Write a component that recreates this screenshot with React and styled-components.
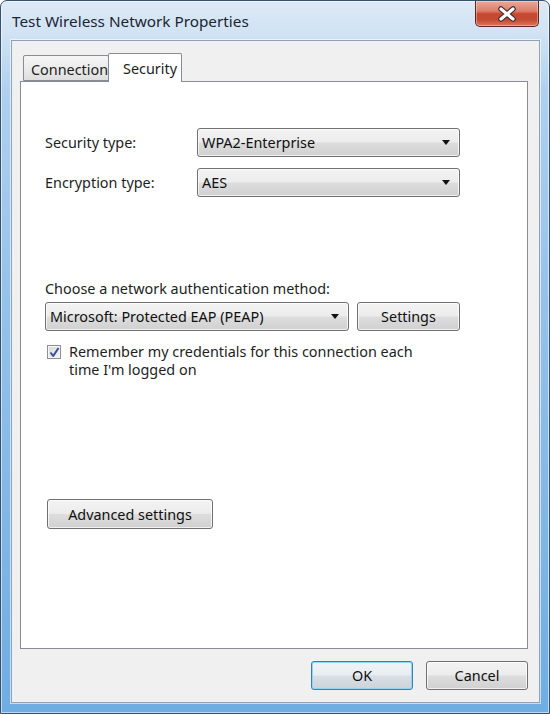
import React from 'react'
import styled, { createGlobalStyle } from 'styled-components'

const TEXT = '#1e1e1e'
const LINE = '#898c95'

const GlobalStyle = createGlobalStyle`
  html, body {
    margin: 0;
    padding: 0;
    background: #ffffff;
  }
  body {
    font-family: "Noto Sans", "Open Sans", sans-serif;
    color: ${TEXT};
  }
`

const Window = styled.div`
  width: 550px;
  height: 714px;
  box-sizing: border-box;
  display: flex;
  flex-direction: column;
  padding: 0 9px 10px 10px;
  border: 1px solid #34506c;
  border-radius: 7px 7px 0 0;
  background: linear-gradient(180deg, #dde9f5 0px, #d2e3f4 30px, #afd0ef 90px, #95c2ea 300px, #6fade2 100%);
  box-shadow: inset 0 0 0 1px rgba(255, 255, 255, 0.55);
`

const TitleBar = styled.div`
  height: 39px;
  flex: none;
  display: flex;
  justify-content: space-between;
  align-items: flex-start;
`

const Title = styled.div`
  margin-top: 10px;
  padding-left: 1px;
  font-size: 15.3px;
  color: #1b2535;
`

const CloseButton = styled.div`
  width: 64px;
  height: 26px;
  box-sizing: border-box;
  margin-right: 1px;
  display: flex;
  align-items: center;
  justify-content: center;
  border: 1px solid #5a2a22;
  border-top: none;
  border-radius: 0 0 5px 5px;
  background: linear-gradient(180deg, #eaa99a 0%, #dc7e6a 40%, #c8462f 52%, #c44b33 75%, #d9785c 100%);
  box-shadow: inset 0 0 0 1px rgba(255, 255, 255, 0.35);
`

const Client = styled.div`
  flex: 1;
  display: flex;
  flex-direction: column;
  background: #f0f0f0;
  border: 1px solid #8ea3ba;
  box-shadow: 0 0 0 1px rgba(255, 255, 255, 0.6);
  padding: 12px 11px 0 8px;
  min-height: 0;
`

const TabStrip = styled.div`
  display: flex;
  align-items: flex-end;
  padding-left: 3px;
  height: 28px;
  flex: none;
`

const Tab = styled.div`
  box-sizing: border-box;
  height: ${p => (p.$active ? '29px' : '26px')};
  width: ${p => p.$width}px;
  margin-left: ${p => (p.$active ? '-1px' : '0')};
  margin-bottom: ${p => (p.$active ? '-1px' : '0')};
  position: relative;
  z-index: ${p => (p.$active ? 1 : 0)};
  border: 1px solid ${LINE};
  border-bottom: ${p => (p.$active ? 'none' : `1px solid ${LINE}`)};
  border-radius: 2px 2px 0 0;
  background: ${p => (p.$active ? '#ffffff' : 'linear-gradient(180deg, #f6f6f6 0%, #ebebeb 50%, #dedede 100%)')};
  display: flex;
  align-items: center;
  padding-left: ${p => p.$pad}px;
  padding-top: ${p => (p.$active ? '0' : '2px')};
  font-size: 14.4px;
  white-space: nowrap;
`

const Panel = styled.div`
  flex: 1;
  display: flex;
  flex-direction: column;
  background: #ffffff;
  border: 1px solid ${LINE};
  padding: 46px 0 0 24px;
`

const FieldRow = styled.div`
  display: grid;
  grid-template-columns: 152px 263px;
  align-items: center;
  height: 29px;
  & + & {
    margin-top: 11px;
  }
  font-size: 14.4px;
`

const Select = styled.div`
  box-sizing: border-box;
  width: ${p => p.$width}px;
  height: 29px;
  display: flex;
  align-items: center;
  justify-content: space-between;
  padding: 0 9px 0 4px;
  border: 1px solid #707070;
  border-radius: 3px;
  background: linear-gradient(180deg, #f3f3f3 0%, #ececec 48%, #dddddd 52%, #d0d0d0 100%);
  box-shadow: inset 0 0 0 1px rgba(255, 255, 255, 0.7);
  font-size: 14.4px;
  color: #101010;
`

const Arrow = styled.span`
  width: 0;
  height: 0;
  border-left: 4px solid transparent;
  border-right: 4px solid transparent;
  border-top: 5px solid #111;
`

const SectionLabel = styled.div`
  margin-top: 83px;
  height: 18px;
  line-height: 18px;
  font-size: 14.4px;
`

const AuthRow = styled.div`
  margin-top: 4px;
  display: flex;
  gap: 8px;
`

const Button = styled.div`
  box-sizing: border-box;
  width: ${p => p.$width}px;
  height: ${p => p.$height || 29}px;
  display: flex;
  align-items: center;
  justify-content: center;
  border: 1px solid ${p => (p.$default ? '#3c7fb1' : '#707070')};
  border-radius: 3px;
  background: ${p =>
    p.$default
      ? 'linear-gradient(180deg, #f0f4f7 0%, #e8edf1 48%, #d9dfe4 52%, #ccd3d9 100%)'
      : 'linear-gradient(180deg, #f3f3f3 0%, #ececec 48%, #dddddd 52%, #d0d0d0 100%)'};
  box-shadow: inset 0 0 0 1px ${p => (p.$default ? '#8fd6f6' : 'rgba(255, 255, 255, 0.7)')};
  font-size: 14.4px;
  color: #101010;
`

const CheckRow = styled.div`
  margin-top: 12px;
  margin-left: 2px;
  display: flex;
  align-items: flex-start;
  gap: 8px;
  font-size: 14.4px;
  line-height: 18px;
`

const CheckBox = styled.div`
  flex: none;
  width: 14px;
  height: 14px;
  box-sizing: border-box;
  margin-top: 2px;
  border: 1px solid #8e8f8f;
  background: linear-gradient(135deg, #d5d9de 0%, #f4f4f4 100%);
  box-shadow: inset 0 0 0 1px #f6f6f6;
  display: flex;
  align-items: center;
  justify-content: center;
`

const AdvancedWrap = styled.div`
  margin-top: 120px;
  margin-left: 2px;
`

const Footer = styled.div`
  flex: none;
  display: flex;
  justify-content: flex-end;
  gap: 13px;
  padding: 12px 0 12px;
`

export default function App() {
  return (
    <>
      <GlobalStyle />
      <Window>
        <TitleBar>
          <Title>Test Wireless Network Properties</Title>
          <CloseButton>
            <svg width="22" height="16" viewBox="0 0 22 16">
              <path d="M5 3 L17 13 M17 3 L5 13" stroke="#3e2a2e" strokeWidth="5.5" strokeLinecap="round" />
              <path d="M5 3 L17 13 M17 3 L5 13" stroke="#ffffff" strokeWidth="3.2" strokeLinecap="round" />
            </svg>
          </CloseButton>
        </TitleBar>
        <Client>
          <TabStrip>
            <Tab $width={86} $pad={7}>Connection</Tab>
            <Tab $active $width={74} $pad={14}>Security</Tab>
          </TabStrip>
          <Panel>
            <FieldRow>
              <span>Security type:</span>
              <Select $width={263}>
                <span>WPA2-Enterprise</span>
                <Arrow />
              </Select>
            </FieldRow>
            <FieldRow>
              <span>Encryption type:</span>
              <Select $width={263}>
                <span>AES</span>
                <Arrow />
              </Select>
            </FieldRow>
            <SectionLabel>Choose a network authentication method:</SectionLabel>
            <AuthRow>
              <Select $width={304}>
                <span>Microsoft: Protected EAP (PEAP)</span>
                <Arrow />
              </Select>
              <Button $width={103}>Settings</Button>
            </AuthRow>
            <CheckRow>
              <CheckBox>
                <svg width="11" height="11" viewBox="0 0 11 11">
                  <path d="M1.5 5.5 L4.2 9 L9.5 1" fill="none" stroke="#3c4f8f" strokeWidth="2" strokeLinejoin="round" />
                </svg>
              </CheckBox>
              <span>
                Remember my credentials for this connection each
                <br />
                time I'm logged on
              </span>
            </CheckRow>
            <AdvancedWrap>
              <Button $width={166} $height={30}>Advanced settings</Button>
            </AdvancedWrap>
          </Panel>
          <Footer>
            <Button $width={102} $default>OK</Button>
            <Button $width={102}>Cancel</Button>
          </Footer>
        </Client>
      </Window>
    </>
  )
}
